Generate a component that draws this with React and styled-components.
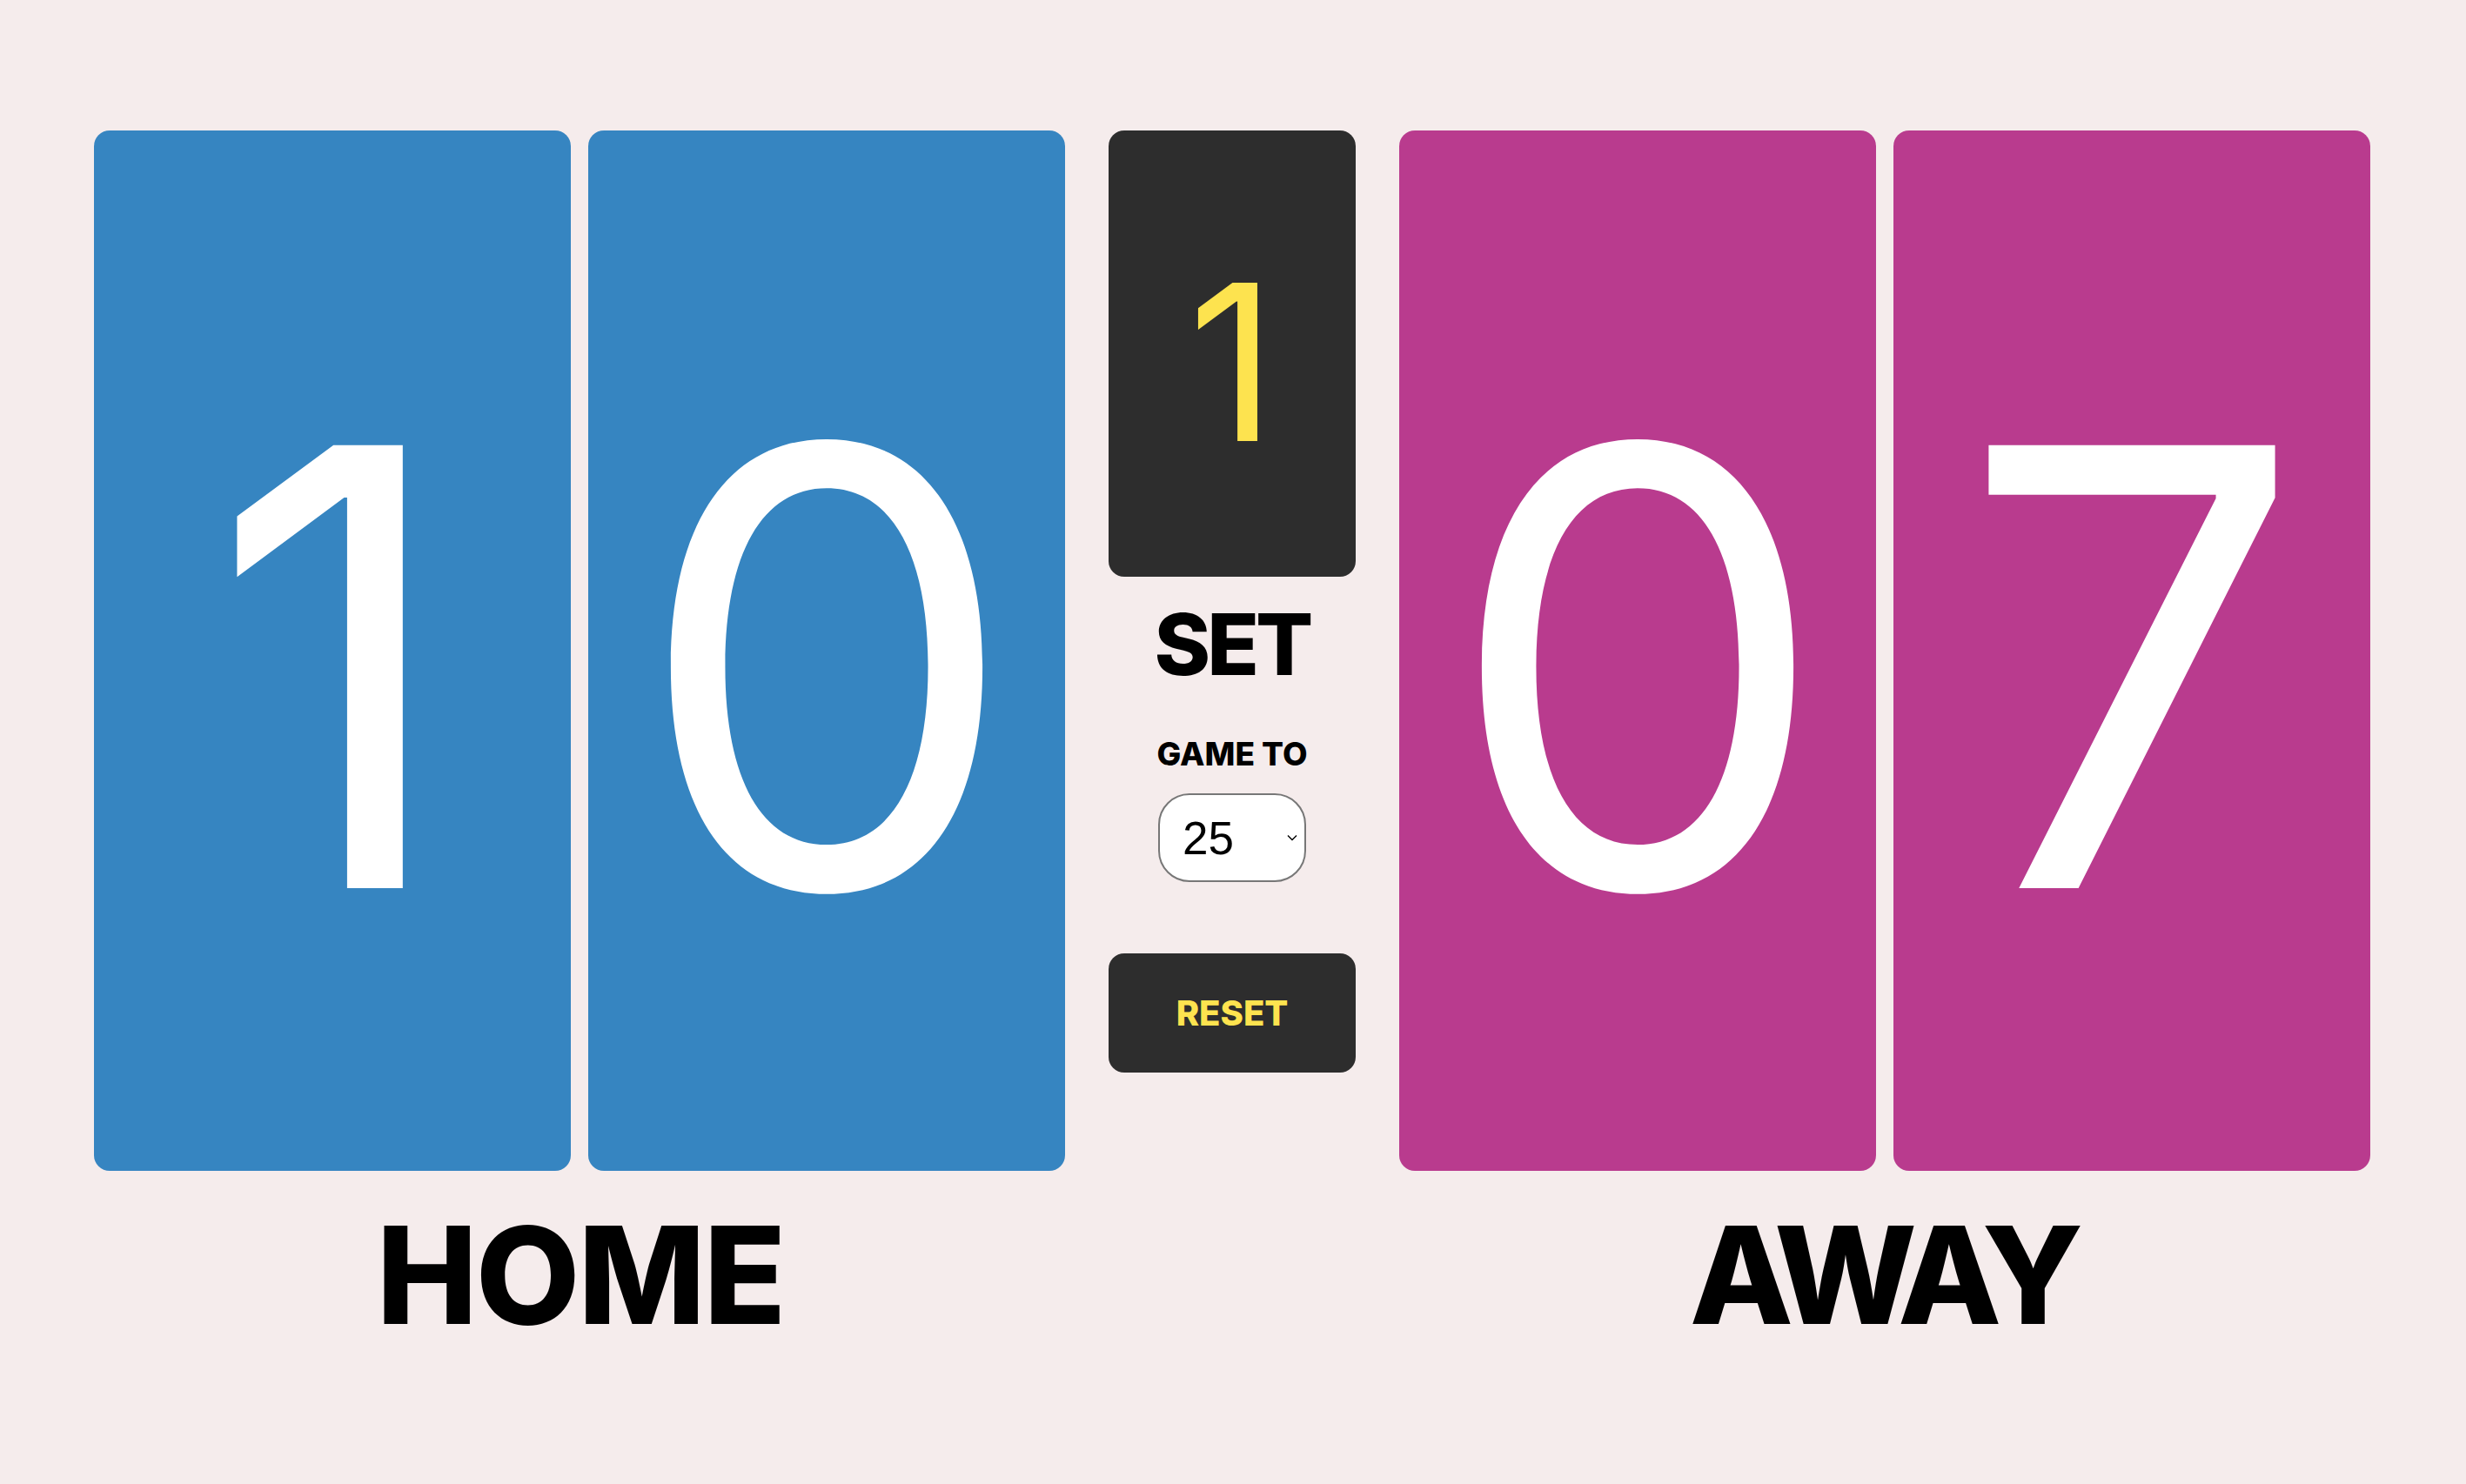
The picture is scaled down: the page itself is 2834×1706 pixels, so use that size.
import React, { useState } from "react";
import styled, { createGlobalStyle } from "styled-components";

const GlobalStyle = createGlobalStyle`
  * { box-sizing: border-box; }
  html, body {
    margin: 0;
    padding: 0;
    background: #f5ecec;
    font-family: Inter, "Noto Sans", sans-serif;
  }
`;

const Board = styled.main`
  display: flex;
  align-items: flex-start;
  gap: 50px;
  padding: 150px 110px 0 108px;
  min-height: 1706px;
`;

const Team = styled.section`
  display: flex;
  flex-direction: column;
  align-items: center;
`;

const DigitRow = styled.div`
  display: flex;
  gap: 20px;
`;

const DigitCard = styled.div`
  width: 548px;
  height: 1196px;
  border-radius: 18px;
  background: ${(p) => p.$color};
  color: #ffffff;
  display: flex;
  align-items: center;
  justify-content: center;
  padding-top: 38px;
  font-size: 700px;
  font-weight: 400;
  line-height: 1;
`;

const TeamName = styled.h2`
  margin: 42px 0 0;
  padding: ${(p) => (p.$tight ? "0 6px 0 0" : "0 0 0 2px")};
  font-size: 155px;
  font-weight: 800;
  line-height: 1;
  color: #000;
  letter-spacing: ${(p) => (p.$tight ? "-10px" : "-2px")};
`;

const Center = styled.aside`
  width: 284px;
  display: flex;
  flex-direction: column;
  align-items: center;
`;

const SetCard = styled.div`
  width: 284px;
  height: 513px;
  border-radius: 18px;
  background: #2d2d2d;
  color: #fde34f;
  display: flex;
  align-items: center;
  justify-content: center;
  padding-top: 19px;
  font-size: 250px;
  line-height: 1;
`;

const SetLabel = styled.h3`
  margin: 29px 0 0;
  padding-left: 0;
  font-size: 98px;
  font-weight: 800;
  line-height: 1;
  color: #000;
  letter-spacing: -4px;
`;

const GameTo = styled.label`
  margin-top: 58px;
  font-size: 37px;
  font-weight: 800;
  line-height: 1;
  color: #000;
`;

const SelectWrap = styled.div`
  position: relative;
  margin-top: 27px;
  width: 170px;
  height: 102px;
`;

const Select = styled.select`
  appearance: none;
  width: 100%;
  height: 100%;
  border: 2px solid #777;
  border-radius: 36px;
  background: #fff;
  color: #000;
  font-family: "Liberation Sans", Arial, sans-serif;
  font-size: 53px;
  padding: 0 0 0 26px;
  outline: none;
`;

const Chevron = styled.svg`
  position: absolute;
  right: 10px;
  top: 50%;
  transform: translateY(-50%);
  pointer-events: none;
`;

const ResetButton = styled.button`
  margin-top: 82px;
  width: 284px;
  height: 137px;
  border: none;
  border-radius: 18px;
  background: #2d2d2d;
  color: #fde34f;
  font-family: Inter, "Noto Sans", sans-serif;
  font-size: 40px;
  font-weight: 800;
  cursor: pointer;
`;

export default function App() {
  const [home] = useState(10);
  const [away] = useState(7);
  const [set] = useState(1);
  const [target, setTarget] = useState("25");

  const digits = (n) => String(n).padStart(2, "0").split("");

  return (
    <>
      <GlobalStyle />
      <Board>
        <Team>
          <DigitRow>
            {digits(home).map((d, i) => (
              <DigitCard key={i} $color="#3685c1">{d}</DigitCard>
            ))}
          </DigitRow>
          <TeamName>HOME</TeamName>
        </Team>

        <Center>
          <SetCard>{set}</SetCard>
          <SetLabel>SET</SetLabel>
          <GameTo htmlFor="game-to">GAME TO</GameTo>
          <SelectWrap>
            <Select id="game-to" value={target} onChange={(e) => setTarget(e.target.value)}>
              <option value="15">15</option>
              <option value="21">21</option>
              <option value="25">25</option>
            </Select>
            <Chevron width="12" height="8" viewBox="0 0 12 8">
              <path d="M1 1.5 L6 6.5 L11 1.5" fill="none" stroke="#000" strokeWidth="1.4" />
            </Chevron>
          </SelectWrap>
          <ResetButton>RESET</ResetButton>
        </Center>

        <Team>
          <DigitRow>
            {digits(away).map((d, i) => (
              <DigitCard key={i} $color="#b93b8e">{d}</DigitCard>
            ))}
          </DigitRow>
          <TeamName $tight>AWAY</TeamName>
        </Team>
      </Board>
    </>
  );
}
